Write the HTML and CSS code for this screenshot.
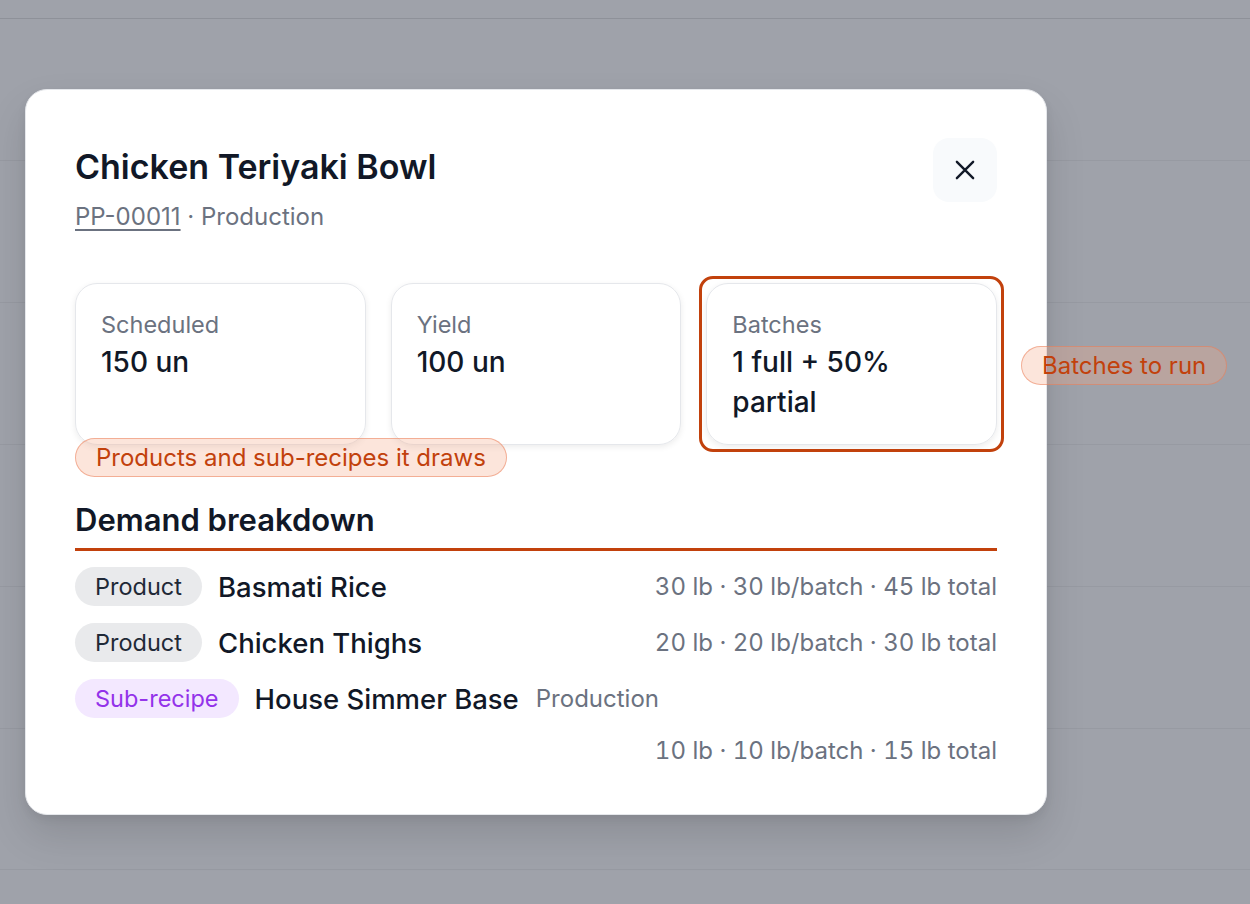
FILE: index.html
```html
<!DOCTYPE html>
<html lang="en">
<head>
<meta charset="UTF-8">
<meta name="viewport" content="width=device-width, initial-scale=1.0">
<title>Chicken Teriyaki Bowl</title>
<link rel="stylesheet" href="styles.css">
</head>
<body>
<div class="backdrop">
    <div class="bg-row"></div>
    <div class="bg-row"></div>
    <div class="bg-row"></div>
    <div class="bg-row"></div>
    <div class="bg-row"></div>
    <div class="bg-row"></div>
</div>

<div class="modal">
    <div class="modal-header">
        <div class="title-block">
            <h1 class="title">Chicken Teriyaki Bowl</h1>
            <div class="subtitle"><span class="code">PP-00011</span> · Production</div>
        </div>
        <button class="close-btn" aria-label="Close">
            <svg width="26" height="26" viewBox="0 0 24 24" fill="none" stroke="#111827" stroke-width="2.2" stroke-linecap="round">
                <path d="M4.5 4.5 L19.5 19.5 M19.5 4.5 L4.5 19.5"/>
            </svg>
        </button>
    </div>

    <div class="stats">
        <div class="stat">
            <div class="stat-label">Scheduled</div>
            <div class="stat-value">150 un</div>
        </div>
        <div class="stat">
            <div class="stat-label">Yield</div>
            <div class="stat-value">100 un</div>
        </div>
        <div class="stat stat-marked">
            <div class="stat-label">Batches</div>
            <div class="stat-value">1 full + 50% partial</div>
            <span class="note note-side">Batches to run</span>
        </div>
        <span class="note note-below">Products and sub-recipes it draws</span>
    </div>

    <h2 class="section-title">Demand breakdown</h2>

    <div class="lines">
        <div class="line">
            <span class="tag tag-product">Product</span>
            <span class="line-name">Basmati Rice</span>
            <span class="line-qty">30 lb · 30 lb/batch · 45 lb total</span>
        </div>
        <div class="line">
            <span class="tag tag-product">Product</span>
            <span class="line-name">Chicken Thighs</span>
            <span class="line-qty">20 lb · 20 lb/batch · 30 lb total</span>
        </div>
        <div class="line line-wrap">
            <span class="tag tag-sub">Sub-recipe</span>
            <span class="line-name">House Simmer Base</span>
            <span class="line-kind">Production</span>
            <span class="line-qty">10 lb · 10 lb/batch · 15 lb total</span>
        </div>
    </div>
</div>
</body>
</html>
```

FILE: styles.css
```css
* {
    box-sizing: border-box;
}

body {
    margin: 0;
    font-family: Inter, "Noto Sans", sans-serif;
    background-color: #9fa2aa;
    color: #111827;
    height: 904px;
    overflow: hidden;
}

/* faint table rows behind the overlay */
.backdrop {
    padding-top: 18px;
}

.bg-row {
    height: 142px;
    border-top: 1px solid #979aa2;
}

.bg-row:first-child {
    border-top-color: #8e9199;
}

.bg-row:last-child {
    border-bottom: 1px solid #979aa2;
}

.modal {
    position: absolute;
    left: 25px;
    top: 89px;
    width: 1022px;
    height: 726px;
    background-color: #fff;
    border: 1px solid #e5e7eb;
    border-radius: 22px;
    box-shadow: 0 20px 40px rgba(0, 0, 0, 0.12), 0 4px 10px rgba(0, 0, 0, 0.06);
    padding: 48px 49px 0 49px;
}

.modal-header {
    display: flex;
    justify-content: space-between;
    align-items: flex-start;
}

.title {
    margin: 8px 0 0 0;
    font-size: 34px;
    font-weight: 600;
    line-height: 42px;
}

.subtitle {
    margin-top: 14px;
    font-size: 24px;
    line-height: 30px;
    color: #6b7280;
}

.code {
    text-decoration: underline;
    text-underline-offset: 4px;
}

.close-btn {
    width: 64px;
    height: 64px;
    border: none;
    border-radius: 16px;
    background-color: #f8fafc;
    display: flex;
    justify-content: center;
    align-items: center;
    cursor: pointer;
}

.stats {
    position: relative;
    display: grid;
    grid-template-columns: repeat(3, 1fr);
    gap: 25px;
    margin-top: 51px;
}

.stat {
    position: relative;
    height: 162px;
    border: 1.5px solid #e5e7eb;
    border-radius: 22px;
    box-shadow: 0 2px 6px rgba(0, 0, 0, 0.08);
    padding: 26px 25px;
}

.stat-label {
    font-size: 23.5px;
    line-height: 30px;
    color: #6b7280;
}

.stat-value {
    margin-top: 2px;
    font-size: 28px;
    font-weight: 500;
    line-height: 40px;
    color: #111827;
}

.stat-marked::after {
    content: "";
    position: absolute;
    inset: -8px;
    border: 3px solid #c2410c;
    border-radius: 14px;
    pointer-events: none;
}

/* annotation pills */
.note {
    position: absolute;
    white-space: nowrap;
    font-size: 24px;
    line-height: 37px;
    padding: 0 20px;
    color: #c2410c;
    background-color: rgba(245, 170, 135, 0.3);
    border: 1px solid rgba(234, 120, 80, 0.5);
    border-radius: 20px;
}

.note-side {
    left: calc(100% + 25px);
    top: 62px;
}

.note-below {
    left: 0;
    top: 155px;
}

.section-title {
    margin: 56px 0 0 0;
    font-size: 31px;
    font-weight: 600;
    line-height: 38px;
    padding-bottom: 9px;
    border-bottom: 3px solid #c2410c;
}

.lines {
    margin-top: 16px;
}

.line {
    display: flex;
    flex-wrap: wrap;
    align-items: center;
    min-height: 39px;
    margin-bottom: 17px;
}

.tag {
    display: inline-block;
    font-size: 23.5px;
    line-height: 39px;
    padding: 0 20px;
    border-radius: 20px;
    margin-right: 16px;
}

.tag-product {
    background-color: #e9eaec;
    color: #1f2937;
}

.tag-sub {
    background-color: #f3e8ff;
    color: #9333ea;
}

.line-name {
    font-size: 27.5px;
    font-weight: 500;
    color: #111827;
}

.line-kind {
    margin-left: 17px;
    font-size: 24px;
    color: #6b7280;
}

.line-qty {
    margin-left: auto;
    font-size: 24px;
    color: #6b7280;
    font-variant-numeric: tabular-nums;
}

.line-wrap .line-qty {
    flex-basis: 100%;
    text-align: right;
    margin-top: 18px;
}
```
